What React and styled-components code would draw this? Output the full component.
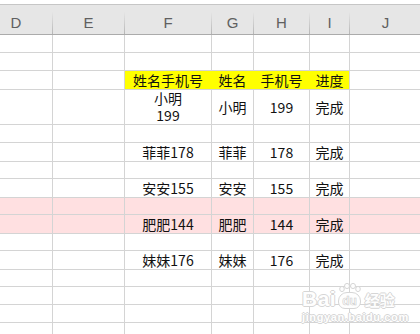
import React from "react";
import styled, { createGlobalStyle } from "styled-components";

const Global = createGlobalStyle`
  html, body { margin: 0; padding: 0; background: #fff; overflow: hidden; }
  body { width: 420px; height: 334px; }
`;

const COLS = "73px 72px 87px 42px 56px 40px 72px";
const GRID = "#d4d4d4";
const MARK_LINE = "#d6d6d6";

const Page = styled.div`
  position: relative;
  width: 420px;
  height: 334px;
  overflow: hidden;
  padding-top: 4px;
  box-sizing: border-box;
`;

const Sheet = styled.div`
  margin-left: -20px;
  width: 442px;
`;

const HeaderRow = styled.div`
  display: grid;
  grid-template-columns: ${COLS};
  background: #e6e6e6;
  border-top: 1px solid #c6c6c6;
  border-bottom: 1px solid #ababab;
`;

const ColHead = styled.div`
  height: 29px;
  box-sizing: border-box;
  display: flex;
  align-items: center;
  justify-content: center;
  padding-top: 5px;
  font-family: "Liberation Sans", Arial, sans-serif;
  font-size: 15px;
  color: #606060;
  border-right: 1px solid transparent;
  border-image: linear-gradient(to bottom, rgba(180,180,180,0) 25%, #b4b4b4 100%) 1;
`;

const Row = styled.div`
  display: grid;
  grid-template-columns: ${COLS};
  height: ${(p) => p.$h || 18}px;
  background: ${(p) => (p.$pink ? "#ffe0e1" : "#fff")};
`;

const Cell = styled.div`
  box-sizing: border-box;
  border-right: 1px solid ${(p) => (p.$fill && !p.$edge ? p.$fill : GRID)};
  border-bottom: 1px solid ${GRID};
  background: ${(p) => p.$fill || "transparent"};
  display: flex;
  flex-direction: column;
  align-items: center;
  justify-content: center;
  padding-top: 1px;
  font-family: "Noto Sans CJK SC", "Noto Sans", sans-serif;
  font-size: 14px;
  line-height: 17px;
  color: #111;
  white-space: nowrap;
`;

const Line = styled.span`
  display: block;
  height: 17px;
`;

const Mark = styled.div`
  position: absolute;
  left: 302px;
  top: 282px;
  display: flex;
  flex-direction: column;
  align-items: flex-start;
  pointer-events: none;
  font-family: "Liberation Sans", Arial, sans-serif;
  font-weight: bold;
  color: #fefefe;
  text-shadow: 1px 0 0 ${MARK_LINE}, -1px 0 0 ${MARK_LINE}, 0 1px 0 ${MARK_LINE}, 0 -1px 0 ${MARK_LINE};
`;

const MarkLine = styled.div`
  display: flex;
  align-items: flex-end;
  height: 27px;
`;

const MarkBig = styled.span`
  font-size: 21px;
  line-height: 20px;
  letter-spacing: 0.5px;
`;

const Paw = styled.span`
  display: inline-flex;
  flex-direction: column;
  align-items: center;
  margin: 0 4px 0 2px;
`;

const PawPad = styled.span`
  display: inline-block;
  background: #fefefe;
  border: 1px solid ${MARK_LINE};
  border-radius: 9px 9px 7px 7px;
  padding: 1px 3px 0;
  font-size: 12px;
  line-height: 14px;
  text-shadow: none;
  color: #fefefe;
  -webkit-text-stroke: 0.6px #cdcdcd;
`;

const MarkCn = styled.span`
  font-family: "Noto Sans CJK SC", sans-serif;
  font-size: 15px;
  line-height: 19px;
`;

const MarkUrl = styled.div`
  font-size: 11px;
  line-height: 12px;
  margin-top: 2px;
  letter-spacing: 0.6px;
`;

const heads = ["D", "E", "F", "G", "H", "I", "J"];

const blank = ["", "", "", "", "", "", ""];

const rows = [
  { cells: blank },
  { cells: blank },
  { cells: ["", "", "姓名手机号", "姓名", "手机号", "进度", ""], yellow: true },
  { cells: ["", "", ["小明", "199"], "小明", "199", "完成", ""], h: 36 },
  { cells: blank },
  { cells: ["", "", "菲菲178", "菲菲", "178", "完成", ""] },
  { cells: blank },
  { cells: ["", "", "安安155", "安安", "155", "完成", ""] },
  { cells: blank, pink: true },
  { cells: ["", "", "肥肥144", "肥肥", "144", "完成", ""], pink: true },
  { cells: blank },
  { cells: ["", "", "妹妹176", "妹妹", "176", "完成", ""] },
  { cells: blank },
  { cells: blank },
  { cells: blank },
  { cells: blank },
];

export default function App() {
  return (
    <Page>
      <Global />
      <Sheet>
        <HeaderRow>
          {heads.map((h) => (
            <ColHead key={h}>{h}</ColHead>
          ))}
        </HeaderRow>
        {rows.map((r, i) => (
          <Row key={i} $h={r.h} $pink={r.pink}>
            {r.cells.map((c, j) => {
              const fill = r.yellow && j >= 2 && j <= 5 ? "#ffff00" : undefined;
              return (
                <Cell key={j} $fill={fill} $edge={j === 5}>
                  {Array.isArray(c) ? c.map((t) => <Line key={t}>{t}</Line>) : c}
                </Cell>
              );
            })}
          </Row>
        ))}
      </Sheet>
      <Mark>
        <MarkLine>
          <MarkBig>Bai</MarkBig>
          <Paw>
            <svg width="22" height="9" viewBox="0 0 22 9">
              <g fill="#fefefe" stroke={MARK_LINE} strokeWidth="1">
                <ellipse cx="3" cy="6" rx="2.3" ry="2.6" />
                <ellipse cx="8" cy="3" rx="2.5" ry="2.6" />
                <ellipse cx="14" cy="3" rx="2.5" ry="2.6" />
                <ellipse cx="19" cy="6" rx="2.3" ry="2.6" />
              </g>
            </svg>
            <PawPad>du</PawPad>
          </Paw>
          <MarkCn>经验</MarkCn>
        </MarkLine>
        <MarkUrl>jingyan.baidu.com</MarkUrl>
      </Mark>
    </Page>
  );
}
